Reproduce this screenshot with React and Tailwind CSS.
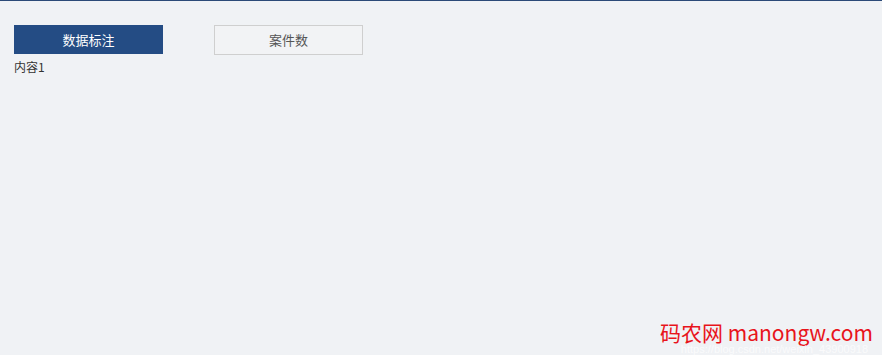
import React, { useState } from 'react';

const tabs = ['数据标注', '案件数'];

const App = () => {
  const [active, setActive] = useState(0);

  return (
    <div
      className="relative w-full h-[355px] overflow-hidden bg-[#f0f2f5] border-t border-[#2b4a78]"
      style={{ fontFamily: '"Microsoft YaHei", "Noto Sans CJK SC", sans-serif' }}
    >
      <div className="pl-[14px] pt-[24px]">
        <div className="flex gap-[51px]">
          {tabs.map((t, i) => (
            <button
              key={t}
              onClick={() => setActive(i)}
              className={
                i === active
                  ? 'w-[149px] h-[29px] bg-[#244c84] text-white text-[13px] border border-[#244c84]'
                  : 'w-[149px] h-[30px] bg-[#f2f3f5] text-[#555] text-[13px] border border-[#cfcfcf]'
              }
            >
              {t}
            </button>
          ))}
        </div>
        <p className="text-[12px] leading-[16px] mt-[4px] text-[#333]">内容{active + 1}</p>
      </div>

      {/* watermark */}
      <div className="absolute right-[9px] bottom-[12px] text-[21px] leading-[21px] text-[#e8141b]">
        码农网 manongw.com
      </div>
      <div
        className="absolute right-[14px] bottom-0 text-[11px] leading-[11px] text-white/70"
        style={{ fontFamily: '"Liberation Sans", sans-serif' }}
      >
        https://blog.csdn.net/weixin_43900918
      </div>
    </div>
  );
};

export default App;
